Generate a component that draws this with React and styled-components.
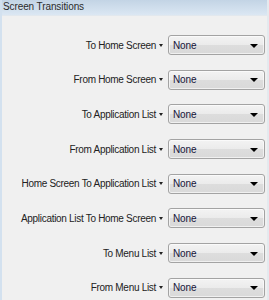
import React from 'react';
import styled, { createGlobalStyle } from 'styled-components';

const GlobalStyle = createGlobalStyle`
  html, body {
    margin: 0;
    padding: 0;
    background: #f0f0f0;
  }
  body {
    font-family: "Liberation Sans", "DejaVu Sans", sans-serif;
    font-size: 10px;
  }
`

const Panel = styled.div`
  width: 269px;
  height: 300px;
  overflow: hidden;
  background: #f0f0f0;
  box-sizing: border-box;
  border-left: 2px solid #d3e1ef;
  border-right: 2px solid #e4e9ee;
`

const Header = styled.div`
  height: 15px;
  line-height: 14px;
  color: #2b2b2b;
  background: linear-gradient(to bottom, #c3d4e5, #dbe7f3);
  border-bottom: 1px solid #e2e8ee;
  margin-left: -2px;
  padding-left: 3px;
  letter-spacing: -0.1px;
`

const List = styled.div`
  display: flex;
  flex-direction: column;
  gap: 14.7px;
  padding-top: 19px;
  padding-right: 2px;
`

const Row = styled.div`
  display: flex;
  align-items: center;
  justify-content: flex-end;
  height: 20px;
`

const Label = styled.div`
  display: flex;
  align-items: center;
  gap: 3px;
  color: #222;
  margin-right: 5px;
  white-space: nowrap;
  letter-spacing: -0.3px;
`

const SmallCaret = styled.span`
  width: 0;
  height: 0;
  border-left: 2.5px solid transparent;
  border-right: 2.5px solid transparent;
  border-top: 3px solid #222;
`

const Select = styled.div`
  flex-shrink: 0;
  width: 97px;
  height: 20px;
  box-sizing: border-box;
  border: 1px solid #a3a3a3;
  border-radius: 3px;
  background: linear-gradient(to bottom, #f3f3f3 0%, #ebebeb 50%, #dddddd 51%, #d9d9d9 100%);
  display: flex;
  align-items: center;
  justify-content: space-between;
  padding: 0 6px 0 4px;
  color: #15153a;
  letter-spacing: -0.1px;
  box-shadow: inset 0 0 0 1px rgba(255, 255, 255, 0.6);
`

const Arrow = styled.span`
  width: 0;
  height: 0;
  border-left: 4px solid transparent;
  border-right: 4px solid transparent;
  border-top: 4px solid #000;
  margin-top: 1px;
`

const transitions = [
  'To Home Screen',
  'From Home Screen',
  'To Application List',
  'From Application List',
  'Home Screen To Application List',
  'Application List To Home Screen',
  'To Menu List',
  'From Menu List',
]

const App = () => {
  return (
    <>
      <GlobalStyle />
      <Panel>
        <Header>Screen Transitions</Header>
        <List>
          {transitions.map(name => (
            <Row key={name}>
              <Label>
                {name}
                <SmallCaret />
              </Label>
              <Select>
                <span>None</span>
                <Arrow />
              </Select>
            </Row>
          ))}
        </List>
      </Panel>
    </>
  )
}

export default App;
